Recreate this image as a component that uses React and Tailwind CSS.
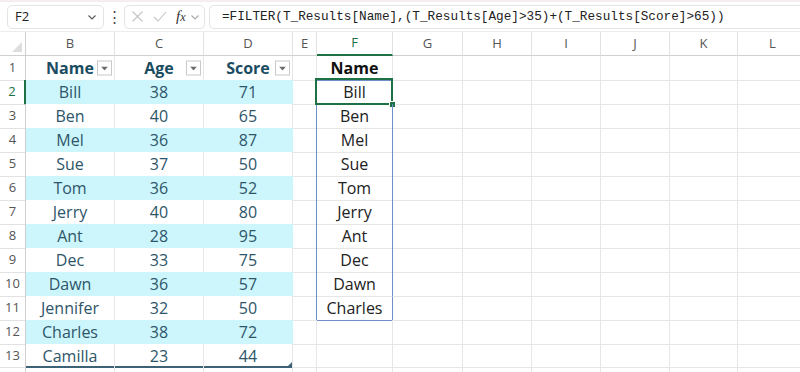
import React from "react";

const COLS = ["B", "C", "D", "E", "F", "G", "H", "I", "J", "K", "L"];

const DATA = [
  ["Bill", 38, 71],
  ["Ben", 40, 65],
  ["Mel", 36, 87],
  ["Sue", 37, 50],
  ["Tom", 36, 52],
  ["Jerry", 40, 80],
  ["Ant", 28, 95],
  ["Dec", 33, 75],
  ["Dawn", 36, 57],
  ["Jennifer", 32, 50],
  ["Charles", 38, 72],
  ["Camilla", 23, 44],
];

const SPILL = ["Bill", "Ben", "Mel", "Sue", "Tom", "Jerry", "Ant", "Dec", "Dawn", "Charles"];

const GRID = "grid grid-cols-[26px_89px_89px_89px_24px_76px_70px_69px_69px_69px_68px_70px]";

function Chevron({ className }) {
  return (
    <svg width="10" height="10" viewBox="0 0 10 10" className={className}>
      <path d="M1.5 3.5 L5 7 L8.5 3.5" fill="none" stroke="currentColor" strokeWidth="1.1" />
    </svg>
  );
}

function FilterBtn() {
  return (
    <span className="absolute right-[2px] top-1/2 -translate-y-1/2 w-[15px] h-[15px] border border-[#c9c9c9] bg-white flex items-center justify-center">
      <svg width="7" height="4" viewBox="0 0 7 4">
        <path d="M0 0 H7 L3.5 4 Z" fill="#6b6b6b" />
      </svg>
    </span>
  );
}

function FormulaBar() {
  return (
    <div className="h-[32px] flex items-center border-b border-[#ececec] bg-white border-t-[2px] border-t-[#f6eeee]">
      <div className="ml-[7px] w-[97px] h-[24px] rounded-[5px] border border-[#e4e4e4] flex items-center justify-between pl-[7px] pr-[6px]">
        <span className="text-[13px] text-[#222]">F2</span>
        <Chevron className="text-[#555]" />
      </div>
      <span className="w-[20px] text-center text-[15px] text-[#444] leading-none">⋮</span>
      <div className="w-[81px] h-[24px] rounded-[5px] border border-[#e4e4e4] flex items-center pl-[6px] gap-[9px]">
        <svg width="13" height="13" viewBox="0 0 13 13">
          <path d="M1.5 1.5 L11.5 11.5 M11.5 1.5 L1.5 11.5" stroke="#c4c4c4" strokeWidth="1.1" />
        </svg>
        <svg width="14" height="13" viewBox="0 0 14 13">
          <path d="M1 7 L5 11 L13 2" fill="none" stroke="#c4c4c4" strokeWidth="1.1" />
        </svg>
        <span className="text-[15px] italic text-[#333] font-['Liberation_Serif',serif] leading-none">
          f<span className="text-[12px]">x</span>
        </span>
        <Chevron className="text-[#aaa] -ml-[5px]" />
      </div>
      <div className="ml-[4px] flex-1 h-[24px] rounded-l-[5px] border border-r-0 border-[#e4e4e4] flex items-center pl-[12px]">
        <span className="text-[12.7px] text-[#222] font-['Liberation_Mono',monospace] whitespace-nowrap">
          =FILTER(T_Results[Name],(T_Results[Age]&gt;35)+(T_Results[Score]&gt;65))
        </span>
      </div>
    </div>
  );
}

function HeaderRow() {
  return (
    <div className={`${GRID} h-[24px] bg-white`}>
      <div className="relative border-r border-b border-[#cfcfcf]">
        <svg width="10" height="10" viewBox="0 0 10 10" className="absolute right-[3px] bottom-[3px]">
          <path d="M10 0 V10 H0 Z" fill="#dedede" />
        </svg>
      </div>
      {COLS.map((c) => (
        <div
          key={c}
          className={
            c === "F"
              ? "flex items-center justify-center text-[13px] text-[#1e7145] border-r border-[#e2e2e2] border-b-2 border-b-[#1e7145]"
              : "flex items-center justify-center text-[13px] text-[#555] border-r border-b border-[#e2e2e2] border-b-[#cfcfcf]"
          }
        >
          {c}
        </div>
      ))}
    </div>
  );
}

function SheetRow({ n }) {
  const isHead = n === 1;
  const rec = n >= 2 && n <= 13 ? DATA[n - 2] : null;
  const band = n >= 2 && n <= 13 && n % 2 === 0;
  const last = n === 13;
  const inSpill = n >= 2 && n <= 11;
  const fVal = n === 1 ? "Name" : inSpill ? SPILL[n - 2] : "";

  const tableCell = band
    ? "relative flex items-center justify-center bg-[#cdf6fc] border-r border-b border-[#cdf6fc]"
    : last
    ? "relative flex items-center justify-center bg-white border-r border-[#e6e6e6] shadow-[inset_0_-2px_0_#3e6275]"
    : "relative flex items-center justify-center bg-white border-r border-b border-[#e6e6e6]";
  const textCls = isHead ? "font-bold text-[#1b4d62]" : "text-[#2d5569]";

  return (
    <div className={`${GRID} h-[24px]`}>
      <div
        className={
          n === 2
            ? "flex items-center justify-center text-[13px] text-[#1e7145] border-b border-[#e2e2e2] border-r-2 border-r-[#1e7145]"
            : "flex items-center justify-center text-[13px] text-[#555] border-b border-[#e2e2e2] border-r border-r-[#cfcfcf]"
        }
      >
        {n <= 13 ? n : ""}
      </div>
      {[0, 1, 2].map((i) => (
        <div key={i} className={tableCell}>
          <span className={textCls}>{isHead ? ["Name", "Age", "Score"][i] : rec ? rec[i] : ""}</span>
          {isHead && <FilterBtn />}
          {last && i === 2 && (
            <svg width="5" height="5" viewBox="0 0 5 5" className="absolute right-0 bottom-[1px]">
              <path d="M5 0 V5 H0 Z" fill="#3e6275" />
            </svg>
          )}
        </div>
      ))}
      <div
        className={
          inSpill
            ? "border-b border-[#e6e6e6] border-r border-r-[#6f8fc7]"
            : "border-r border-b border-[#e6e6e6]"
        }
      />
      <div
        className={
          n === 1
            ? "flex items-center justify-center border-r border-[#e6e6e6] border-b border-b-[#6f8fc7]"
            : n === 11
            ? "flex items-center justify-center border-r border-b border-[#6f8fc7]"
            : inSpill
            ? "relative flex items-center justify-center border-b border-[#e6e6e6] border-r border-r-[#6f8fc7]"
            : "flex items-center justify-center border-r border-b border-[#e6e6e6]"
        }
      >
        <span className={n === 1 ? "font-bold text-[#111]" : "text-[#222]"}>{fVal}</span>
        {n === 2 && (
          <>
            <span className="absolute -left-[2px] -top-[2px] -right-[1px] -bottom-[1px] border-2 border-[#1e7145]" />
            <span className="absolute -right-[4px] -bottom-[4px] w-[7px] h-[7px] bg-[#1e7145] border border-white" />
          </>
        )}
      </div>
      {[0, 1, 2, 3, 4, 5].map((i) => (
        <div key={i} className="border-r border-b border-[#e6e6e6]" />
      ))}
    </div>
  );
}

export default function App() {
  return (
    <div className="w-[800px] h-[372px] overflow-hidden bg-white font-['Open_Sans',sans-serif] text-[16px]">
      <FormulaBar />
      <HeaderRow />
      {Array.from({ length: 14 }, (_, i) => (
        <SheetRow key={i} n={i + 1} />
      ))}
    </div>
  );
}
